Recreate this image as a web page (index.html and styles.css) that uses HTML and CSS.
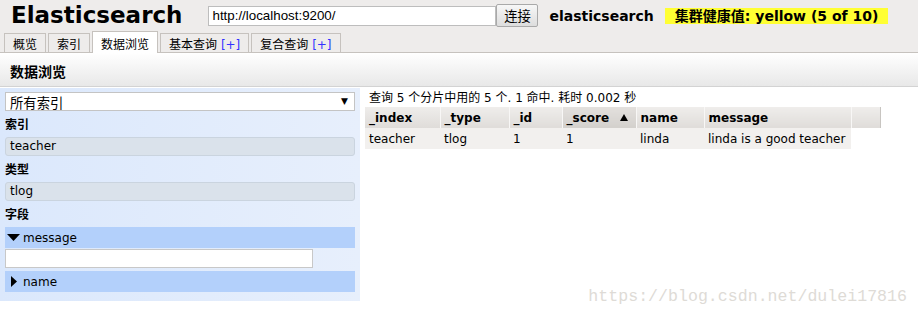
FILE: index.html
```html
<!DOCTYPE html>
<html lang="zh">
<head>
<meta charset="utf-8">
<title>Elasticsearch</title>
<link rel="stylesheet" href="styles.css">
</head>
<body>
<header class="top">
  <div class="bar">
    <h1 class="logo">Elasticsearch</h1>
    <div class="connect">
      <input class="url" type="text" value="http://localhost:9200/">
      <button class="btn" type="button">连接</button>
    </div>
    <span class="cluster">elasticsearch</span>
    <span class="health">集群健康值: yellow (5 of 10)</span>
  </div>
  <nav class="tabs">
    <span class="tab">概览</span>
    <span class="tab">索引</span>
    <span class="tab active">数据浏览</span>
    <span class="tab">基本查询 <span class="plus">[+]</span></span>
    <span class="tab">复合查询 <span class="plus">[+]</span></span>
  </nav>
</header>

<div class="section"><h2>数据浏览</h2></div>

<main class="main">
  <aside class="side">
    <div class="select-wrap">
      <select class="select"><option>所有索引</option></select>
      <span class="caret">▼</span>
    </div>
    <div class="label">索引</div>
    <div class="box">teacher</div>
    <div class="label">类型</div>
    <div class="box">tlog</div>
    <div class="label">字段</div>
    <div class="field">
      <span class="ico"><svg width="13" height="7" viewBox="0 0 13 7"><path d="M0 0H13L6.5 7Z" fill="#000"/></svg></span>
      <span>message</span>
    </div>
    <input class="filter" type="text">
    <div class="field">
      <span class="ico"><svg width="6" height="11" viewBox="0 0 6 11"><path d="M0 0L6 5.5L0 11Z" fill="#000"/></svg></span>
      <span>name</span>
    </div>
  </aside>

  <section class="results">
    <div class="summary">查询 5 个分片中用的 5 个. 1 命中. 耗时 0.002 秒</div>
    <table class="grid">
      <colgroup>
        <col class="c-index"><col class="c-type"><col class="c-id"><col class="c-score"><col class="c-name"><col class="c-msg"><col class="c-pad">
      </colgroup>
      <thead>
        <tr>
          <th>_index</th>
          <th>_type</th>
          <th>_id</th>
          <th class="sorted"><span class="th-in">_score<svg width="8" height="7" viewBox="0 0 8 7"><path d="M4 0L8 7H0Z" fill="#000"/></svg></span></th>
          <th>name</th>
          <th>message</th>
          <th class="pad"></th>
        </tr>
      </thead>
      <tbody>
        <tr>
          <td>teacher</td>
          <td>tlog</td>
          <td>1</td>
          <td>1</td>
          <td>linda</td>
          <td>linda is a good teacher</td>
        </tr>
      </tbody>
    </table>
  </section>
</main>

<div class="watermark">https://blog.csdn.net/dulei17816</div>
</body>
</html>
```
FILE: styles.css
```css
* { box-sizing: border-box; }
html, body { margin: 0; }
body {
  font: 12px "DejaVu Sans", "Noto Sans CJK SC", sans-serif;
  color: #000;
  background: #fff;
  position: relative;
  width: 918px;
  height: 317px;
  overflow: hidden;
}

/* header */
.top { background: #eeeceb; border-bottom: 1px solid #c6c2be; }
.bar { display: flex; align-items: center; height: 31px; padding-left: 11px; }
.logo {
  margin: 0 26px 0 0;
  font-size: 23px;
  font-weight: bold;
  line-height: 31px;
}
.connect { display: flex; align-items: center; }
.url {
  width: 288px;
  height: 20px;
  margin: 0;
  padding: 0 3px;
  border: 1px solid #bdbdbd;
  font: 13.33px "Liberation Sans", sans-serif;
  color: #000;
  background: #fff;
}
.btn {
  width: 42px;
  height: 23px;
  margin: 0;
  padding: 0;
  border: 1px solid #a9a9a9;
  border-radius: 2px;
  background: linear-gradient(#f7f7f7, #dddddd);
  font: 13.33px "Noto Sans CJK SC", sans-serif;
  color: #000;
}
.cluster { margin-left: 11px; font-size: 14px; font-weight: bold; }
.health {
  margin-left: 11px;
  padding: 0 10px;
  background: #ffff33;
  font-size: 14px;
  font-weight: bold;
  line-height: 16px;
}

/* tabs */
.tabs { display: flex; align-items: flex-end; gap: 2px; height: 21px; padding-left: 4px; }
.tab {
  height: 19px;
  padding: 4px 8px 0;
  line-height: 14px;
  border: 1px solid #c6c2be;
  border-bottom: 0;
  background: #eeeceb;
  white-space: nowrap;
}
.tab.active { height: 22px; margin-bottom: -1px; padding-top: 6px; background: #fff; }
.plus { color: #3333ff; }

/* section title */
.section {
  height: 34px;
  padding: 2px 10px 0;
  display: flex;
  align-items: center;
  border-bottom: 1px solid #d3d3d3;
  background: linear-gradient(#ffffff, #e8e8e8);
}
.section h2 { margin: 0; font-size: 14px; font-weight: bold; }

/* main */
.main { display: flex; align-items: flex-start; gap: 5px; margin-top: 1px; }
.side {
  width: 360px;
  padding: 4px 5px 9px;
  background: linear-gradient(to right, #dbe8fc, #e7effc);
}
.select-wrap { position: relative; height: 19px; }
.select {
  appearance: none;
  -webkit-appearance: none;
  width: 350px;
  height: 19px;
  margin: 0;
  padding: 0 4px;
  border: 1px solid #c4c4c4;
  background: #fff;
  font: 13.33px "Noto Sans CJK SC", sans-serif;
  color: #000;
}
.caret {
  position: absolute;
  right: 7px;
  top: 0;
  line-height: 19px;
  font-size: 9px;
  pointer-events: none;
}
.label { height: 26px; padding-top: 7px; line-height: 14px; font-weight: bold; }
.box {
  height: 19px;
  padding: 0 4px;
  line-height: 17px;
  border: 1px solid #cad4df;
  border-radius: 3px;
  background: #dae2eb;
}
.field {
  display: flex;
  align-items: center;
  height: 21px;
  padding-left: 1px;
  background: #b3d0fb;
}
.ico { width: 15px; margin-right: 2px; display: flex; align-items: center; justify-content: center; }
.ico svg { display: block; }
.filter {
  display: block;
  width: 308px;
  height: 19px;
  margin: 1px 0 3px;
  padding: 0 3px;
  border: 1px solid #c8c8c8;
  background: #fff;
}

.results { flex: 1; }
.summary { height: 19px; line-height: 17px; padding: 2px 0 0 4px; }
.grid { border-collapse: collapse; table-layout: fixed; width: 515px; }
.c-index { width: 75px; }
.c-type { width: 69px; }
.c-id { width: 53px; }
.c-score { width: 74px; }
.c-name { width: 68px; }
.c-msg { width: 147px; }
.c-pad { width: 29px; }
.grid th {
  height: 21px;
  padding: 0 4px;
  text-align: left;
  font-weight: bold;
  white-space: nowrap;
  background: linear-gradient(#efedeb, #dfdcd9);
  border-right: 1px solid #f8f7f6;
}
.grid th.sorted { background: linear-gradient(#e3e0dd, #d3d0cc); }
.grid th.pad { border-right: 1px solid #c8c5c1; }
.th-in { display: flex; align-items: center; justify-content: space-between; padding-right: 4px; }
.grid td {
  height: 21px;
  padding: 0 4px;
  background: #f2f0ee;
  white-space: nowrap;
}

.watermark {
  position: absolute;
  right: 11px;
  top: 287px;
  font: 16.6px "Liberation Mono", monospace;
  color: #dedbd6;
}
```
